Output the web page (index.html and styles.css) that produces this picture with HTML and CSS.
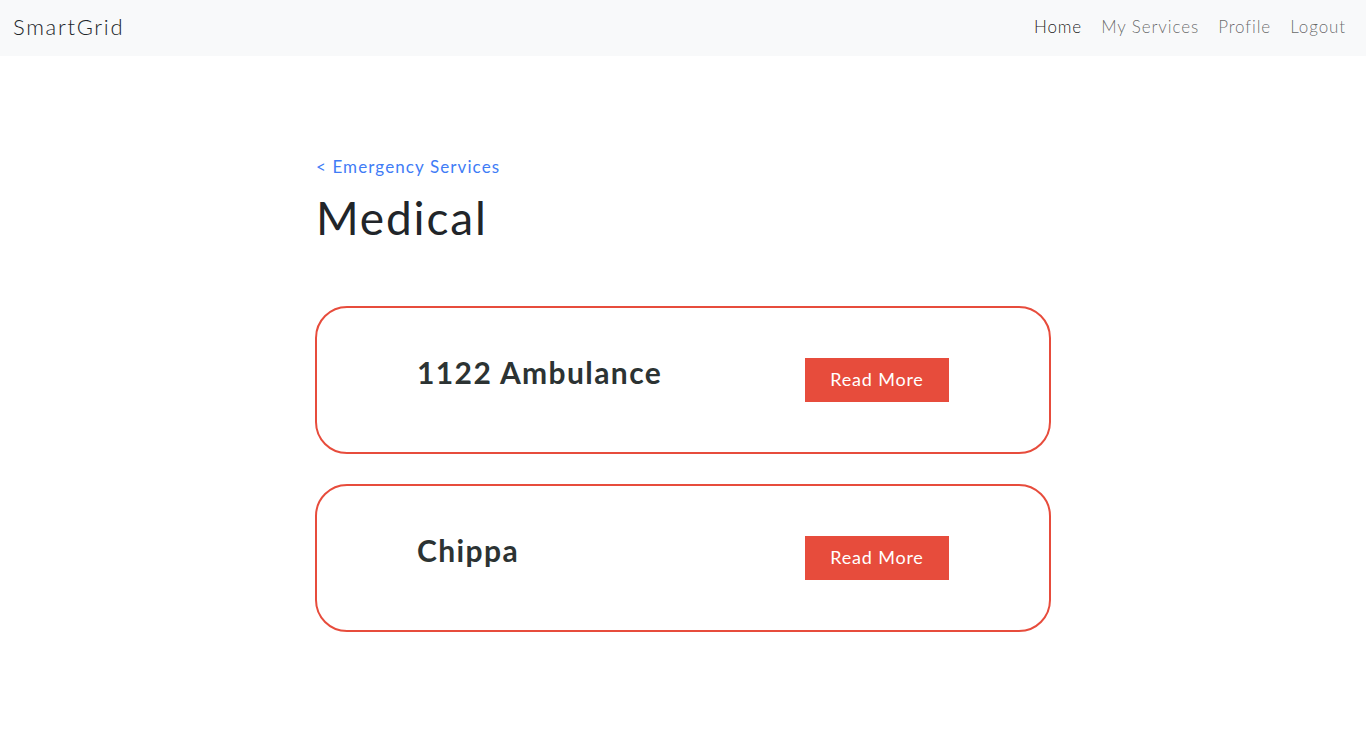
FILE: index.html
```html
<!DOCTYPE html>
<html lang="en">
<head>
<meta charset="utf-8">
<title>SmartGrid - Medical</title>
<link rel="stylesheet" href="styles.css">
</head>
<body>
<nav class="navbar">
  <a class="brand" href="#">SmartGrid</a>
  <ul class="nav-links">
    <li><a class="nav-link active" href="#">Home</a></li>
    <li><a class="nav-link" href="#">My Services</a></li>
    <li><a class="nav-link" href="#">Profile</a></li>
    <li><a class="nav-link" href="#">Logout</a></li>
  </ul>
</nav>
<main class="content">
  <a class="back-link" href="#">&lt; Emergency Services</a>
  <h1 class="page-title">Medical</h1>
  <section class="service-list">
    <div class="service-card">
      <h2 class="service-name">1122 Ambulance</h2>
      <a class="read-more" href="#">Read More</a>
    </div>
    <div class="service-card">
      <h2 class="service-name">Chippa</h2>
      <a class="read-more" href="#">Read More</a>
    </div>
  </section>
</main>
</body>
</html>
```
FILE: styles.css
```css
* { box-sizing: border-box; }
body {
  margin: 0;
  font-family: "Lato", "Open Sans", sans-serif;
  color: #212529;
  background: #fff;
}
a { text-decoration: none; }
.navbar {
  height: 56px;
  background: #f8f9fa;
  display: flex;
  align-items: center;
  justify-content: space-between;
  padding: 0 20px 3px 13px;
}
.brand {
  font-size: 22px;
  font-weight: 300;
  color: #212529;
  letter-spacing: 1.7px;
}
.nav-links {
  list-style: none;
  margin: 0;
  padding: 0;
  display: flex;
  gap: 19px;
}
.nav-link {
  font-size: 17px;
  font-weight: 300;
  color: rgba(0, 0, 0, 0.6);
  letter-spacing: 0.9px;
}
.nav-link.active { color: rgba(0, 0, 0, 0.9); }
.content {
  width: 736px;
  margin: 0 auto;
  padding-top: 100px;
}
.back-link {
  display: block;
  margin-left: 1px;
  font-size: 17px;
  line-height: 22px;
  color: #3f7cf6;
  letter-spacing: 1.1px;
}
.page-title {
  margin: 12px 0 0 1px;
  font-size: 46px;
  font-weight: 400;
  line-height: 56px;
  letter-spacing: 1.85px;
  color: #212529;
}
.service-list {
  margin-top: 60px;
  display: flex;
  flex-direction: column;
  gap: 30px;
}
.service-card {
  height: 148px;
  border: 2px solid #e74c3c;
  border-radius: 32px;
  display: flex;
  justify-content: space-between;
  align-items: flex-start;
  padding: 50px 100px 0 100px;
}
.service-name {
  margin: -4px 0 0;
  font-size: 30px;
  font-weight: 700;
  line-height: 36px;
  color: #2c3333;
  letter-spacing: 1.4px;
}
.read-more {
  width: 144px;
  height: 44px;
  padding-bottom: 2px;
  background: #e74c3c;
  color: #fff;
  font-size: 18px;
  display: flex;
  align-items: center;
  justify-content: center;
  letter-spacing: 0.8px;
}
```
